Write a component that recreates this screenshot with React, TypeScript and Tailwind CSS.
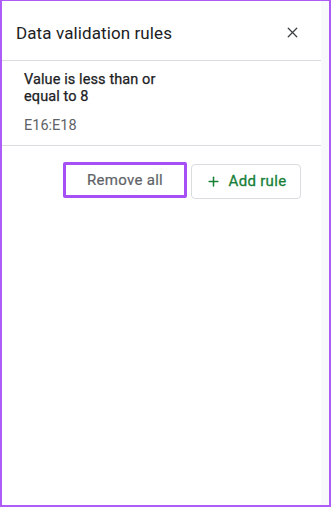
import { X, Plus } from 'lucide-react'

const font = { fontFamily: 'Roboto, "Liberation Sans", Arial, sans-serif' }

export default function App() {
  return (
    <div
      className="flex h-[507px] w-[331px] border-x-2 border-b-2 border-t border-[#ad5cf7] bg-white text-[#202124]"
      style={font}
    >
      {/* Main panel */}
      <div className="flex min-w-0 flex-1 flex-col bg-white">
        <div className="flex h-[60px] shrink-0 items-center justify-between border-b border-[#dadce0] pl-[14px] pr-[20px] pt-[4px]">
          <span className="text-[17px] leading-5 tracking-[0.1px] text-[#202124]">Data validation rules</span>
          <X className="h-[17px] w-[17px] text-[#3c4043]" strokeWidth={1.8} />
        </div>

        {/* Rule item */}
        <div className="border-b border-[#dadce0] pb-[11px] pl-[22px] pt-[10px]">
          <div className="max-w-[150px] text-[14.5px] leading-[17px] tracking-[0.1px] text-[#202124] [-webkit-text-stroke:0.25px_#202124]">
            Value is less than or equal to 8
          </div>
          <div className="mt-[12px] text-[14.5px] leading-[17px] text-[#5f6368]">E16:E18</div>
        </div>

        {/* Actions */}
        <div className="flex items-start justify-end gap-[4px] pr-[20px] pt-[16px]">
          <button
            type="button"
            className="flex h-[36px] w-[124px] items-center justify-center rounded-[2px] border-[3px] border-[#a64ff5] text-[15px] tracking-[0.3px] text-[#5f6368] [-webkit-text-stroke:0.2px_#5f6368]"
          >
            Remove all
          </button>
          <button
            type="button"
            className="mt-[2px] flex h-[35px] w-[110px] items-center justify-center gap-[8px] rounded-[4px] border border-[#dadce0] text-[15px] tracking-[0.3px] text-[#188038] [-webkit-text-stroke:0.3px_#188038]"
          >
            <Plus className="h-[15px] w-[15px]" strokeWidth={2.4} />
            Add rule
          </button>
        </div>
      </div>

      {/* Right strip */}
      <div className="w-[8px] shrink-0 bg-[#f8f9fb]" />
    </div>
  )
}
